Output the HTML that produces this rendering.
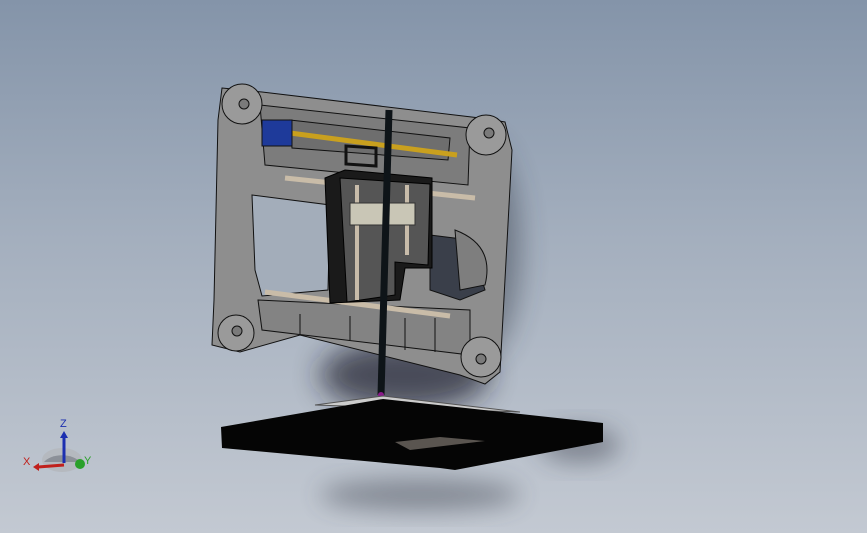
<!DOCTYPE html>
<html><head><style>
html,body{margin:0;padding:0;width:867px;height:533px;overflow:hidden}
body{background:linear-gradient(180deg,#8494a9 0%,#a4afbe 45%,#c3c9d2 100%)}
svg{position:absolute;left:0;top:0}
</style></head><body>
<svg width="867" height="533" viewBox="0 0 867 533">
<defs>
<filter id="b1" x="-50%" y="-50%" width="200%" height="200%"><feGaussianBlur stdDeviation="14"/></filter>
<filter id="b2" x="-50%" y="-50%" width="200%" height="200%"><feGaussianBlur stdDeviation="12"/></filter>
</defs>
<!-- shadows -->
<ellipse cx="405" cy="375" rx="85" ry="35" fill="#1a1f2a" opacity=".7" filter="url(#b1)"/>
<ellipse cx="480" cy="250" rx="40" ry="110" fill="#2a303c" opacity=".45" filter="url(#b1)"/>
<ellipse cx="420" cy="495" rx="100" ry="16" fill="#3a404c" opacity=".45" filter="url(#b2)"/>
<ellipse cx="580" cy="445" rx="40" ry="18" fill="#2a2f3a" opacity=".4" filter="url(#b2)"/>
<!-- frame -->
<polygon points="222,88 262,92 480,118 505,122 512,150 500,372 485,384 460,375 300,335 240,352 212,345 214,300 218,120" fill="#8e8e8e" stroke="#111" stroke-width="1"/>
<polygon points="252,195 330,205 328,290 262,296 255,270" fill="#a3adba" stroke="#111"/>
<polygon points="430,235 470,240 485,290 460,300 430,290" fill="#3a3f4a" stroke="#111"/>
<path d="M455,230 Q495,245 485,285 L460,290 Z" fill="#7e7e7e" stroke="#111"/>
<polygon points="260,105 470,128 468,185 265,165" fill="#7c7c7c" stroke="#111"/>
<polygon points="290,120 450,138 448,160 292,148" fill="#6e6e6e" stroke="#111"/>
<polygon points="258,300 470,310 470,355 262,330" fill="#838383" stroke="#111"/>
<line x1="300" y1="314" x2="300" y2="335" stroke="#111"/>
<line x1="350" y1="316" x2="350" y2="340" stroke="#111"/>
<line x1="405" y1="318" x2="405" y2="350" stroke="#111"/>
<line x1="435" y1="318" x2="435" y2="352" stroke="#111"/>
<g fill="#9a9a9a" stroke="#111">
<circle cx="242" cy="104" r="20"/><circle cx="486" cy="135" r="20"/>
<circle cx="236" cy="333" r="18"/><circle cx="481" cy="357" r="20"/>
</g>
<g fill="#7a7a7a" stroke="#111">
<circle cx="244" cy="104" r="5"/><circle cx="489" cy="133" r="5"/>
<circle cx="237" cy="331" r="5"/><circle cx="481" cy="359" r="5"/>
</g>
<line x1="285" y1="178" x2="475" y2="198" stroke="#c9bca8" stroke-width="5"/>
<line x1="265" y1="292" x2="450" y2="316" stroke="#c9bca8" stroke-width="5"/>
<line x1="290" y1="133" x2="457" y2="155" stroke="#c9a01e" stroke-width="5"/>
<rect x="262" y="120" width="30" height="26" fill="#1e3a9a" stroke="#111"/>
<polygon points="325,178 345,170 432,178 432,268 405,268 400,300 330,303" fill="#1a1a1a" stroke="#000"/>
<polygon points="340,178 430,184 428,265 395,262 395,295 347,302" fill="#555" stroke="#000"/>
<polygon points="346,146 376,148 376,166 346,164" fill="none" stroke="#111" stroke-width="3"/>
<line x1="357" y1="185" x2="357" y2="300" stroke="#c8bcaa" stroke-width="4"/>
<line x1="407" y1="185" x2="407" y2="255" stroke="#c8bcaa" stroke-width="4"/>
<rect x="350" y="203" width="65" height="22" fill="#c9c6b6" stroke="#333"/>
<line x1="389" y1="110" x2="381" y2="395" stroke="#0e1418" stroke-width="7"/>
<circle cx="381" cy="395" r="3" fill="#8a1a8a"/>
<polygon points="315,405 383,396 520,412" fill="#ccc" stroke="#555"/>
<polygon points="221,427 383,399 603,423 603,442 455,470 440,468 222,448" fill="#050505"/>
<polygon points="395,442 440,437 485,441 410,450" fill="#5a5550"/>
<ellipse cx="62" cy="460" rx="20" ry="12" fill="#b5b9bf"/>
<path d="M44,462 A20,12 0 0 1 80,462 Z" fill="#8c9098"/>
<line x1="64" y1="463" x2="64" y2="436" stroke="#1c2fb0" stroke-width="3"/>
<polygon points="60,438 68,438 64,431" fill="#1c2fb0"/>
<line x1="64" y1="465" x2="38" y2="467" stroke="#c0201c" stroke-width="3"/>
<polygon points="39,463 39,471 33,467" fill="#c0201c"/>
<circle cx="80" cy="464" r="5" fill="#2aa02a"/>
<text x="60" y="427" font-family="Liberation Sans,sans-serif" font-size="11" fill="#1c2fb0">Z</text>
<text x="23" y="465" font-family="Liberation Sans,sans-serif" font-size="11" fill="#c0201c">X</text>
<text x="84" y="464" font-family="Liberation Sans,sans-serif" font-size="11" fill="#2aa02a">Y</text>
</svg>
</body></html>
